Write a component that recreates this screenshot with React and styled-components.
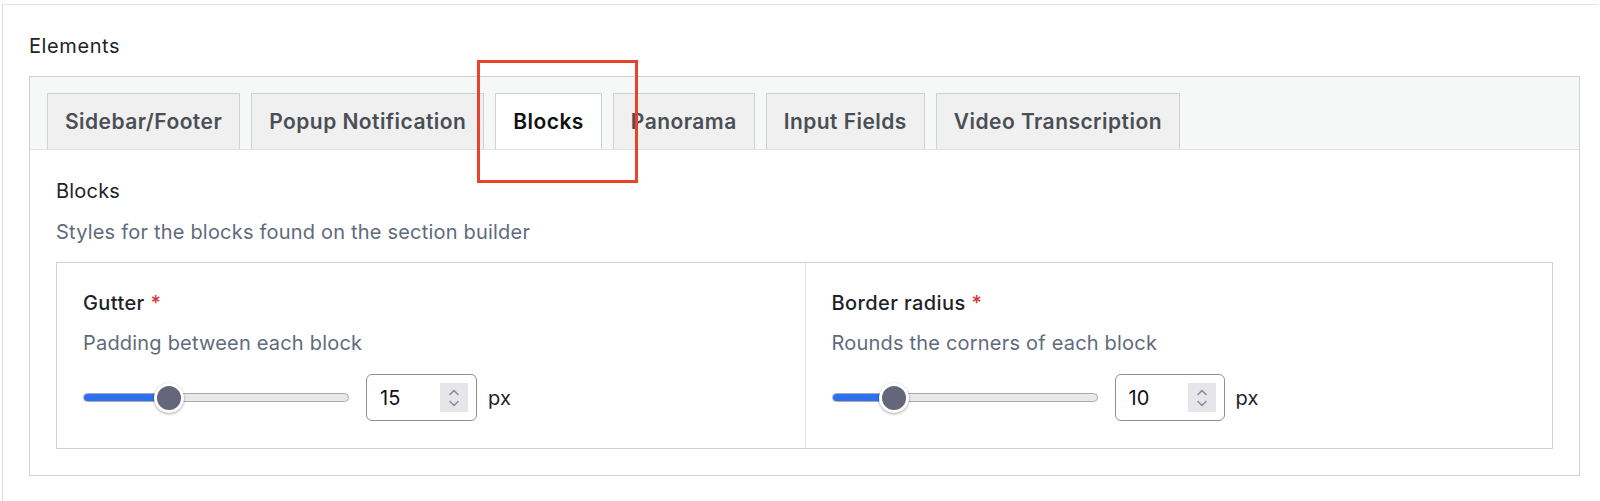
import React from "react"
import styled, { createGlobalStyle } from "styled-components"

const GlobalStyle = createGlobalStyle`
  body {
    margin: 0;
    background: #ffffff;
    font-family: Inter, "Noto Sans", sans-serif;
    color: #1d2327;
    letter-spacing: 0.2px;
  }
`

const Page = styled.div`
  position: relative;
  box-sizing: border-box;
  min-height: 497px;
  margin: 4px 2px 0 2px;
  padding: 27px 18px 0 26px;
  border-top: 1px solid #e2e4e7;
  border-left: 1px solid #dcdcde;
`

const SectionTitle = styled.div`
  font-size: 20px;
  line-height: 28px;
  letter-spacing: 0.6px;
  margin-bottom: 16px;
`

const Fieldset = styled.div`
  border: 1px solid #cfd1d5;
`

const TabBar = styled.div`
  display: flex;
  gap: 11px;
  padding: 16px 0 0 17px;
  background: #f6f7f7;
  border-bottom: 1px solid #e0e2e5;
`

const Tab = styled.div`
  box-sizing: border-box;
  height: 56px;
  display: flex;
  align-items: center;
  padding: 0 17px;
  border: 1px solid #cfd1d5;
  border-bottom: 0;
  background: ${props => (props.active ? "#ffffff" : "#f0f0f1")};
  color: ${props => (props.active ? "#111111" : "#4a4f55")};
  font-size: 21px;
  font-weight: 600;
  letter-spacing: 0.45px;
`

const Content = styled.div`
  padding: 27px 26px 26px;
`

const Heading = styled.div`
  font-size: 20px;
  line-height: 28px;
  margin-bottom: 13px;
`

const Description = styled.div`
  font-size: 20px;
  line-height: 28px;
  color: #5f6b7c;
`

const FieldGrid = styled.div`
  display: grid;
  grid-template-columns: 1fr 1fr;
  margin-top: 16px;
  border: 1px solid #cfd1d5;
`

const Field = styled.div`
  padding: 26px 26px 27px;
  border-left: ${props => (props.divided ? "1px solid #e2e4e7" : "0")};
`

const Label = styled.div`
  font-size: 20px;
  font-weight: 500;
  line-height: 28px;
  letter-spacing: 0.4px;
  margin-bottom: 12px;
`

const Required = styled.span`
  color: #d63638;
`

const ControlRow = styled.div`
  display: flex;
  align-items: center;
  margin-top: 17px;
  height: 47px;
`

const Slider = styled.div`
  position: relative;
  width: 266px;
  height: 30px;
  display: flex;
  align-items: center;
`

const Track = styled.div`
  position: relative;
  box-sizing: border-box;
  width: 100%;
  height: 9px;
  border-radius: 5px;
  background: #e9e9ec;
  border: 1px solid #a9a9b2;
  overflow: hidden;
`

const Fill = styled.div`
  position: absolute;
  left: 0;
  top: -1px;
  bottom: -1px;
  background: #2f6ff0;
`

const Thumb = styled.div`
  position: absolute;
  top: 0;
  box-sizing: border-box;
  width: 30px;
  height: 30px;
  border-radius: 50%;
  background: #66667a;
  border: 3px solid #ffffff;
  box-shadow: 0 1px 3px rgba(0, 0, 0, 0.35);
`

const NumberBox = styled.div`
  box-sizing: border-box;
  display: flex;
  align-items: center;
  justify-content: space-between;
  width: ${props => props.width}px;
  height: 47px;
  margin-left: 17px;
  padding: 0 8px 0 13px;
  border: 1px solid #8c8f94;
  border-radius: 6px;
  font-size: 20px;
  color: #111111;
`

const Spinner = styled.div`
  display: flex;
  align-items: center;
  justify-content: center;
  width: 28px;
  height: 29px;
  background: #e6e6ea;
`

const Unit = styled.span`
  margin-left: 11px;
  font-size: 20px;
  color: #1d2327;
`

const Highlight = styled.div`
  position: absolute;
  left: 474px;
  top: 55px;
  width: 161px;
  height: 123px;
  box-sizing: border-box;
  border: 3px solid #e8432b;
  pointer-events: none;
`

function RangeField({ label, description, value, max, inputWidth, divided }) {
  const pct = value / max
  return (
    <Field divided={divided}>
      <Label>
        {label} <Required>*</Required>
      </Label>
      <Description>{description}</Description>
      <ControlRow>
        <Slider>
          <Track>
            <Fill style={{ width: `${15 + pct * 236}px` }} />
          </Track>
          <Thumb style={{ left: `${pct * 236}px` }} />
        </Slider>
        <NumberBox width={inputWidth}>
          <span>{value}</span>
          <Spinner>
            <svg width="14" height="22" viewBox="0 0 14 22" fill="none">
              <path d="M3 7.5 L7 3.5 L11 7.5" stroke="#8e8e98" strokeWidth="1.6" strokeLinecap="round" strokeLinejoin="round" />
              <path d="M3 14.5 L7 18.5 L11 14.5" stroke="#8e8e98" strokeWidth="1.6" strokeLinecap="round" strokeLinejoin="round" />
            </svg>
          </Spinner>
        </NumberBox>
        <Unit>px</Unit>
      </ControlRow>
    </Field>
  )
}

const tabs = [
  "Sidebar/Footer",
  "Popup Notification",
  "Blocks",
  "Panorama",
  "Input Fields",
  "Video Transcription",
]

export default function App() {
  return (
    <>
      <GlobalStyle />
      <Page>
        <SectionTitle>Elements</SectionTitle>
        <Fieldset>
          <TabBar>
            {tabs.map(t => (
              <Tab key={t} active={t === "Blocks"}>
                {t}
              </Tab>
            ))}
          </TabBar>
          <Content>
            <Heading>Blocks</Heading>
            <Description>Styles for the blocks found on the section builder</Description>
            <FieldGrid>
              <RangeField
                label="Gutter"
                description="Padding between each block"
                value={15}
                max={50}
                inputWidth={111}
              />
              <RangeField
                label="Border radius"
                description="Rounds the corners of each block"
                value={10}
                max={50}
                inputWidth={110}
                divided
              />
            </FieldGrid>
          </Content>
        </Fieldset>
        <Highlight />
      </Page>
    </>
  )
}
